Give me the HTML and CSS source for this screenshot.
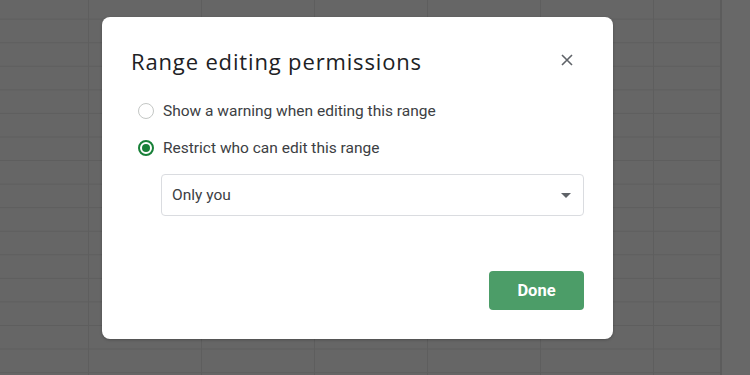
FILE: index.html
```html
<!DOCTYPE html>
<html lang="en">
<head>
  <meta charset="UTF-8" />
  <meta name="viewport" content="width=device-width, initial-scale=1" />
  <title>Range editing permissions</title>
  <link rel="stylesheet" href="styles.css">
</head>
<body>
  <div class="sheet">
    <div class="dialog">
      <header class="dialog-head">
        <h1>Range editing permissions</h1>
        <button class="close" aria-label="Close">
          <svg width="12" height="12" viewBox="0 0 12 12">
            <path d="M1 1 L11 11 M11 1 L1 11" stroke="#5f6368" stroke-width="1.6" fill="none" />
          </svg>
        </button>
      </header>

      <div class="options">
        <label class="option">
          <span class="radio"></span>
          <span>Show a warning when editing this range</span>
        </label>
        <label class="option">
          <span class="radio checked"></span>
          <span>Restrict who can edit this range</span>
        </label>
      </div>

      <div class="select">
        <span>Only you</span>
        <span class="caret"></span>
      </div>

      <div class="actions">
        <button class="done">Done</button>
      </div>
    </div>
  </div>
</body>
</html>
```

FILE: styles.css
```css
* { box-sizing: border-box; }
body, html {
  margin: 0; padding: 0;
  width: 750px;
  height: 375px;
  overflow: hidden;
  font-family: Roboto, 'Noto Sans', Arial, sans-serif;
}

.sheet {
  width: 750px;
  height: 375px;
  padding: 17px 0 0 102px;
  background-color: #666;
  background-image:
    linear-gradient(to right, transparent 720px, #5c5c5c 720px, #5c5c5c 722px, #686868 722px),
    repeating-linear-gradient(to right, transparent 0, transparent 88px, #5e5e5e 88px, #5e5e5e 89px, transparent 89px, transparent 113px),
    repeating-linear-gradient(to bottom, transparent 0, transparent 18.5px, #5e5e5e 18.5px, #5e5e5e 20px, transparent 20px, transparent 23.57px);
  background-size: 750px 375px, 722px 375px, 750px 23.57px;
  background-repeat: no-repeat, no-repeat, repeat-y;
}

.dialog {
  width: 511px;
  height: 322px;
  background: #fff;
  border-radius: 8px;
  padding: 30px 29px 29px 29px;
  display: flex;
  flex-direction: column;
  box-shadow: 0 1px 3px rgba(0,0,0,0.25);
}

.dialog-head {
  display: flex;
  align-items: center;
  justify-content: space-between;
  height: 28px;
}

.dialog-head h1 {
  margin: 0;
  font-family: 'Open Sans', Roboto, sans-serif;
  font-size: 22px;
  font-weight: 400;
  letter-spacing: 0.85px;
  line-height: 28px;
  color: #202124;
}

.close {
  width: 24px;
  height: 24px;
  margin-right: 5px;
  margin-top: -2px;
  border: none;
  background: none;
  padding: 0;
  display: flex;
  align-items: center;
  justify-content: center;
}

.options {
  margin-top: 26px;
  padding-left: 7px;
  display: flex;
  flex-direction: column;
  gap: 17px;
}

.option {
  display: flex;
  align-items: center;
  gap: 9px;
  height: 20px;
  font-size: 15.5px;
  color: #3c4043;
}

.radio {
  width: 16px;
  height: 16px;
  border-radius: 50%;
  border: 1.5px solid #c4c7c5;
  display: flex;
  align-items: center;
  justify-content: center;
}

.radio.checked {
  border: 2px solid #188038;
}

.radio.checked::after {
  content: '';
  width: 8px;
  height: 8px;
  border-radius: 50%;
  background: #188038;
}

.select {
  margin: 16px 0 0 30px;
  height: 42px;
  border: 1px solid #dadce0;
  border-radius: 4px;
  padding: 0 12px 0 10px;
  display: flex;
  align-items: center;
  justify-content: space-between;
  font-size: 15.5px;
  color: #3c4043;
}

.caret {
  width: 0;
  height: 0;
  border-left: 5px solid transparent;
  border-right: 5px solid transparent;
  border-top: 5px solid #5f6368;
}

.actions {
  margin-top: auto;
  display: flex;
  justify-content: flex-end;
}

.done {
  width: 95px;
  height: 39px;
  border: none;
  border-radius: 4px;
  background: #4c9d68;
  color: #fff;
  font-family: Roboto, Arial, sans-serif;
  font-size: 16.5px;
  font-weight: 700;
}
```
